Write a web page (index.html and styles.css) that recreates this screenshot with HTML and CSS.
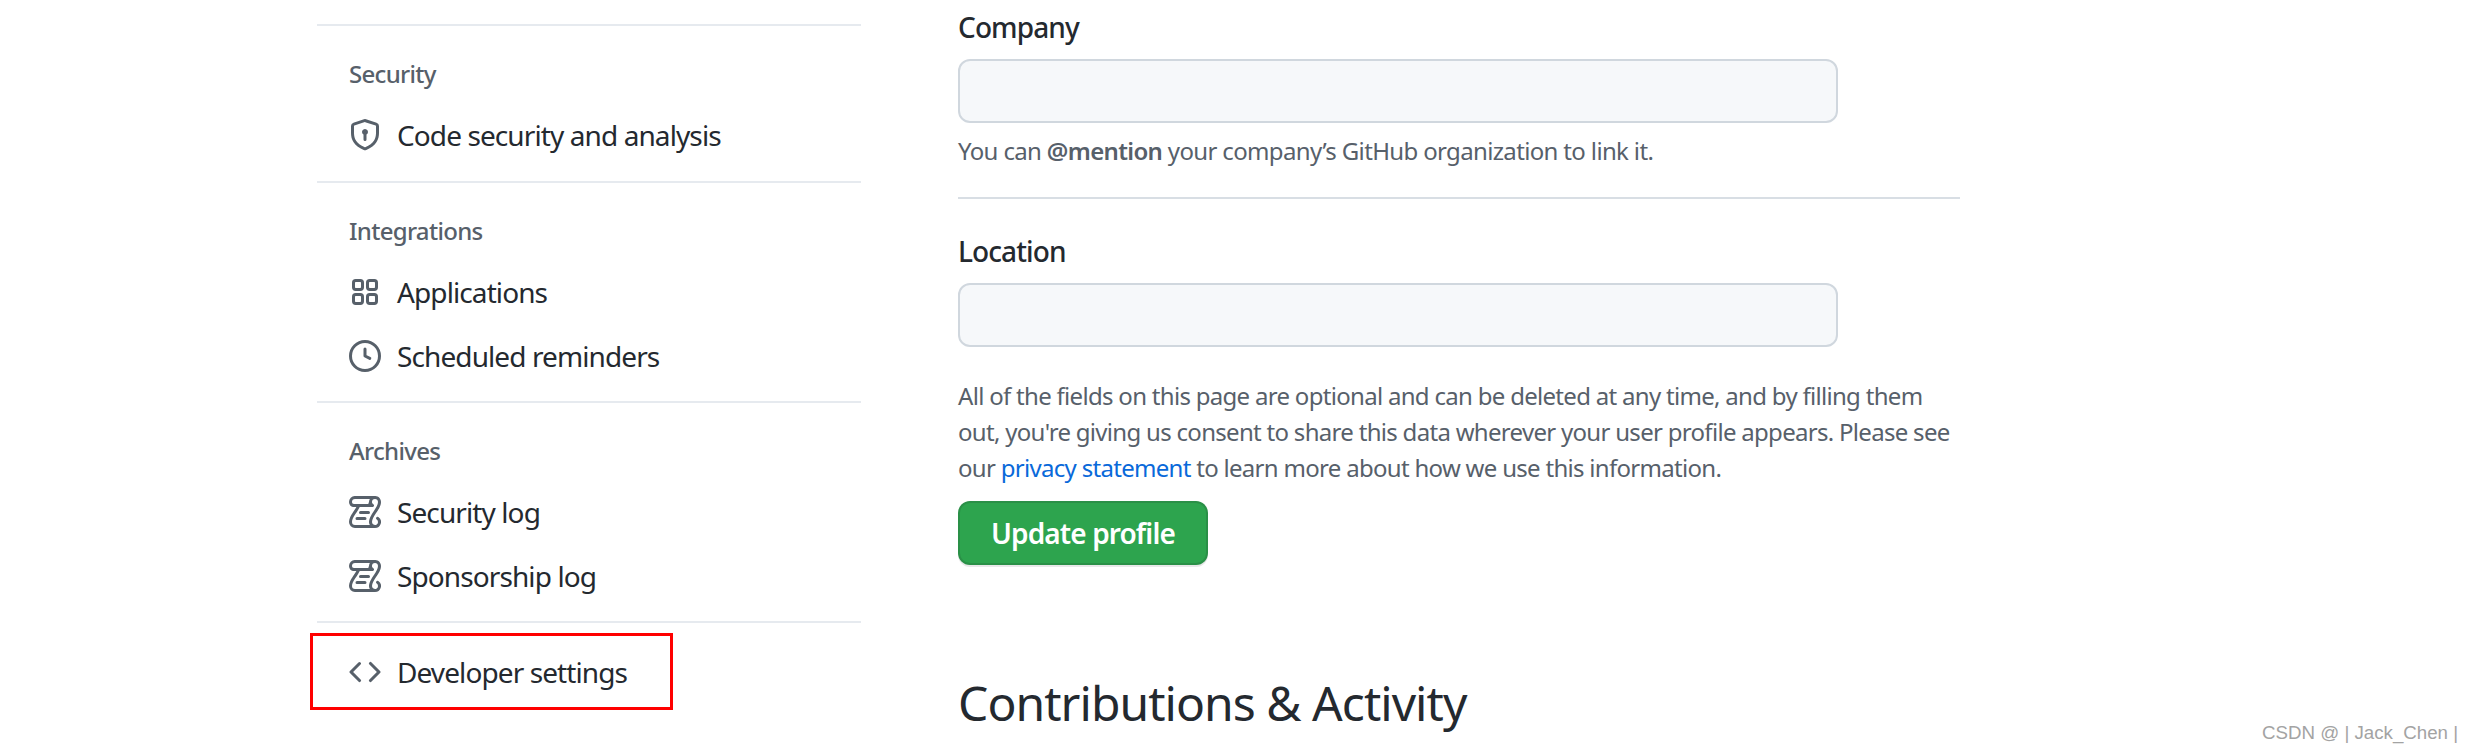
FILE: index.html
```html
<!DOCTYPE html>
<html lang="en">
<head>
    <meta charset="UTF-8">
    <title>Public profile</title>
    <link rel="stylesheet" href="styles.css">
</head>
<body>
    <div class="page">
        <nav class="sidebar">
            <div class="nav-group">
                <h3 class="nav-heading">Security</h3>
                <a class="nav-item" href="#">
                    <svg class="icon" viewBox="0 0 16 16"><path fill-rule="evenodd" d="M7.467.133a1.75 1.75 0 011.066 0l5.25 1.68A1.75 1.75 0 0115 3.48V7c0 1.566-.32 3.182-1.303 4.682-.983 1.498-2.585 2.813-5.032 3.855a1.7 1.7 0 01-1.33 0c-2.447-1.042-4.049-2.357-5.032-3.855C1.32 10.182 1 8.566 1 7V3.48a1.75 1.75 0 011.217-1.667l5.25-1.68zm.61 1.429a.25.25 0 00-.153 0l-5.25 1.68a.25.25 0 00-.174.238V7c0 1.358.275 2.666 1.057 3.86.784 1.194 2.121 2.34 4.366 3.297a.2.2 0 00.154 0c2.245-.956 3.582-2.104 4.366-3.298C13.225 9.666 13.5 8.36 13.5 7V3.48a.25.25 0 00-.174-.237l-5.25-1.68zM9.5 6.5a1.5 1.5 0 01-.75 1.3v2.45a.75.75 0 01-1.5 0V7.8A1.5 1.5 0 119.5 6.5z"/></svg>
                    Code security and analysis
                </a>
            </div>
            <div class="nav-group">
                <h3 class="nav-heading">Integrations</h3>
                <a class="nav-item" href="#">
                    <svg class="icon icon-line" viewBox="0 0 16 16"><rect x="2.25" y="2.25" width="4.5" height="4.5" rx="1.1"/><rect x="9.25" y="2.25" width="4.5" height="4.5" rx="1.1"/><rect x="2.25" y="9.25" width="4.5" height="4.5" rx="1.1"/><rect x="9.25" y="9.25" width="4.5" height="4.5" rx="1.1"/></svg>
                    Applications
                </a>
                <a class="nav-item" href="#">
                    <svg class="icon icon-line" viewBox="0 0 16 16"><circle cx="8" cy="8" r="7.25"/><path d="M8 4.5V8l2.4 1.2"/></svg>
                    Scheduled reminders
                </a>
            </div>
            <div class="nav-group">
                <h3 class="nav-heading">Archives</h3>
                <a class="nav-item" href="#">
                    <svg class="icon" viewBox="0 0 16 16"><use href="#log-icon"/></svg>
                    Security log
                </a>
                <a class="nav-item" href="#">
                    <svg class="icon" viewBox="0 0 16 16"><use href="#log-icon"/></svg>
                    Sponsorship log
                </a>
            </div>
            <div class="nav-group nav-last">
                <a class="nav-item nav-marked" href="#">
                    <svg class="icon" viewBox="0 0 16 16"><path fill-rule="evenodd" d="M4.72 3.22a.75.75 0 011.06 1.06L2.06 8l3.72 3.72a.75.75 0 11-1.06 1.06L.47 8.53a.75.75 0 010-1.06l4.25-4.25zm6.56 0a.75.75 0 10-1.06 1.06L13.94 8l-3.72 3.72a.75.75 0 101.06 1.06l4.25-4.25a.75.75 0 000-1.06l-4.25-4.25z"/></svg>
                    Developer settings
                </a>
            </div>
        </nav>

        <main class="content">
            <div class="form-group">
                <label class="form-label" for="company">Company</label>
                <input class="form-control" type="text" id="company">
                <p class="note">You can <strong>@mention</strong> your company’s GitHub organization to link it.</p>
            </div>
            <hr class="divider">
            <div class="form-group">
                <label class="form-label" for="location">Location</label>
                <input class="form-control" type="text" id="location">
            </div>
            <p class="notice">All of the fields on this page are optional and can be deleted at any time, and by filling them<br>out, you're giving us consent to share this data wherever your user profile appears. Please see<br>our <a href="#">privacy statement</a> to learn more about how we use this information.</p>
            <button class="btn-primary" type="button">Update profile</button>
            <h2 class="section-title">Contributions &amp; Activity</h2>
        </main>
    </div>

    <div class="watermark">CSDN @ | Jack_Chen |</div>

    <svg class="icon-defs" viewBox="0 0 16 16">
        <defs>
            <g id="log-icon">
                <path d="M5 8.25a.75.75 0 01.75-.75h4a.75.75 0 010 1.5h-4A.75.75 0 015 8.25zM4 10.5A.75.75 0 004 12h4a.75.75 0 000-1.5H4z"/>
                <path fill-rule="evenodd" d="M13-.005c1.654 0 3 1.328 3 3 0 .982-.338 1.933-.783 2.818-.443.879-1.028 1.758-1.582 2.588l-.011.017c-.568.853-1.104 1.659-1.501 2.446-.398.789-.623 1.494-.623 2.136a1.5 1.5 0 102.333-1.248.75.75 0 01.834-1.246A3 3 0 0113 16H3a3 3 0 01-3-3c0-1.582.891-3.135 1.777-4.506.209-.322.418-.637.623-.946.473-.709.923-1.386 1.287-2.048H2.51c-.576 0-1.381-.133-1.907-.783A2.68 2.68 0 010 2.995a3 3 0 013-3h10zm0 1.5a1.5 1.5 0 00-1.5 1.5c0 .476.223.834.667 1.132A.75.75 0 0111.75 5.5H5.368c-.467 1.003-1.141 2.015-1.773 2.963-.192.289-.381.571-.558.845C2.13 10.711 1.5 11.916 1.5 13A1.5 1.5 0 003 14.5h7.401A2.989 2.989 0 0110 13c0-.979.338-1.928.784-2.812.441-.874 1.023-1.748 1.575-2.576l.017-.026c.568-.853 1.103-1.658 1.501-2.448.398-.79.623-1.497.623-2.143 0-.838-.669-1.5-1.5-1.5zm-10 0a1.5 1.5 0 00-1.5 1.5c0 .321.1.569.27.778.097.12.325.22.74.22h7.16A2.98 2.98 0 0110 2.995c0-.546.146-1.059.401-1.5H3z"/>
            </g>
        </defs>
    </svg>
</body>
</html>
```

FILE: styles.css
```css
* {
    box-sizing: border-box;
    margin: 0;
    padding: 0;
}

html,
body {
    height: 751px;
    overflow: hidden;
}

body {
    font-family: "Noto Sans", "Open Sans", sans-serif;
    color: #24292f;
    background-color: white;
    position: relative;
}

.page {
    display: flex;
    gap: 97px;
    padding-left: 317px;
}

.sidebar {
    width: 544px;
    flex-shrink: 0;
    padding-top: 24px;
}

.nav-group {
    border-top: 2px solid #e6eaef;
    padding-bottom: 13px;
}

.nav-group:first-child {
    padding-bottom: 14px;
}

.nav-heading {
    font-size: 24px;
    font-weight: 500;
    line-height: 36px;
    color: #57606a;
    padding: 30px 0 11px 32px;
    letter-spacing: -0.7px;
}

.nav-item {
    display: flex;
    align-items: center;
    gap: 16px;
    height: 64px;
    padding-left: 32px;
    font-size: 28px;
    color: #24292f;
    text-decoration: none;
    letter-spacing: -0.9px;
}

.nav-last {
    padding-top: 17px;
}

/* red annotation box from the screenshot */
.nav-marked {
    position: relative;
}

.nav-marked::after {
    content: "";
    box-sizing: border-box;
    position: absolute;
    left: -7px;
    top: -7px;
    width: 363px;
    height: 77px;
    border: 3px solid #f00;
}

.icon {
    width: 32px;
    height: 32px;
    flex-shrink: 0;
    fill: #57606a;
}

.icon-line {
    fill: none;
    stroke: #57606a;
    stroke-width: 1.5;
    stroke-linecap: round;
    stroke-linejoin: round;
}

.icon-defs {
    display: none;
}

.content {
    width: 1002px;
    padding-top: 8px;
}

.form-label {
    display: block;
    font-size: 28px;
    font-weight: 500;
    line-height: 38px;
    margin-bottom: 13px;
    letter-spacing: -0.9px;
}

.form-control {
    display: block;
    width: 880px;
    height: 64px;
    background-color: #f6f8fa;
    border: 2px solid #d0d7de;
    border-radius: 12px;
}

.note {
    font-size: 24px;
    line-height: 36px;
    color: #57606a;
    margin-top: 10px;
    letter-spacing: -0.65px;
}

.note strong {
    font-weight: 600;
}

.divider {
    border: none;
    border-top: 2px solid #d8dee4;
    margin: 28px 0 33px;
}

.notice {
    font-size: 24px;
    line-height: 36px;
    color: #57606a;
    margin-top: 31px;
    letter-spacing: -0.7px;
    white-space: nowrap;
}

.notice a {
    color: #0969da;
    text-decoration: none;
}

.btn-primary {
    display: block;
    width: 250px;
    height: 64px;
    margin-top: 15px;
    font-family: inherit;
    font-size: 28px;
    font-weight: 600;
    color: white;
    background-color: #2da44e;
    border: 2px solid rgba(27, 31, 36, 0.15);
    border-radius: 12px;
    box-shadow: 0 2px 0 rgba(27, 31, 36, 0.1);
    letter-spacing: -0.9px;
}

.section-title {
    font-size: 48px;
    font-weight: 400;
    line-height: 60px;
    margin-top: 108px;
    letter-spacing: -0.95px;
}

.watermark {
    position: absolute;
    right: 15px;
    top: 723px;
    font-family: "Liberation Sans", Arial, sans-serif;
    font-size: 18.7px;
    line-height: 20px;
    color: #a3a3a3;
    white-space: nowrap;
}
```
